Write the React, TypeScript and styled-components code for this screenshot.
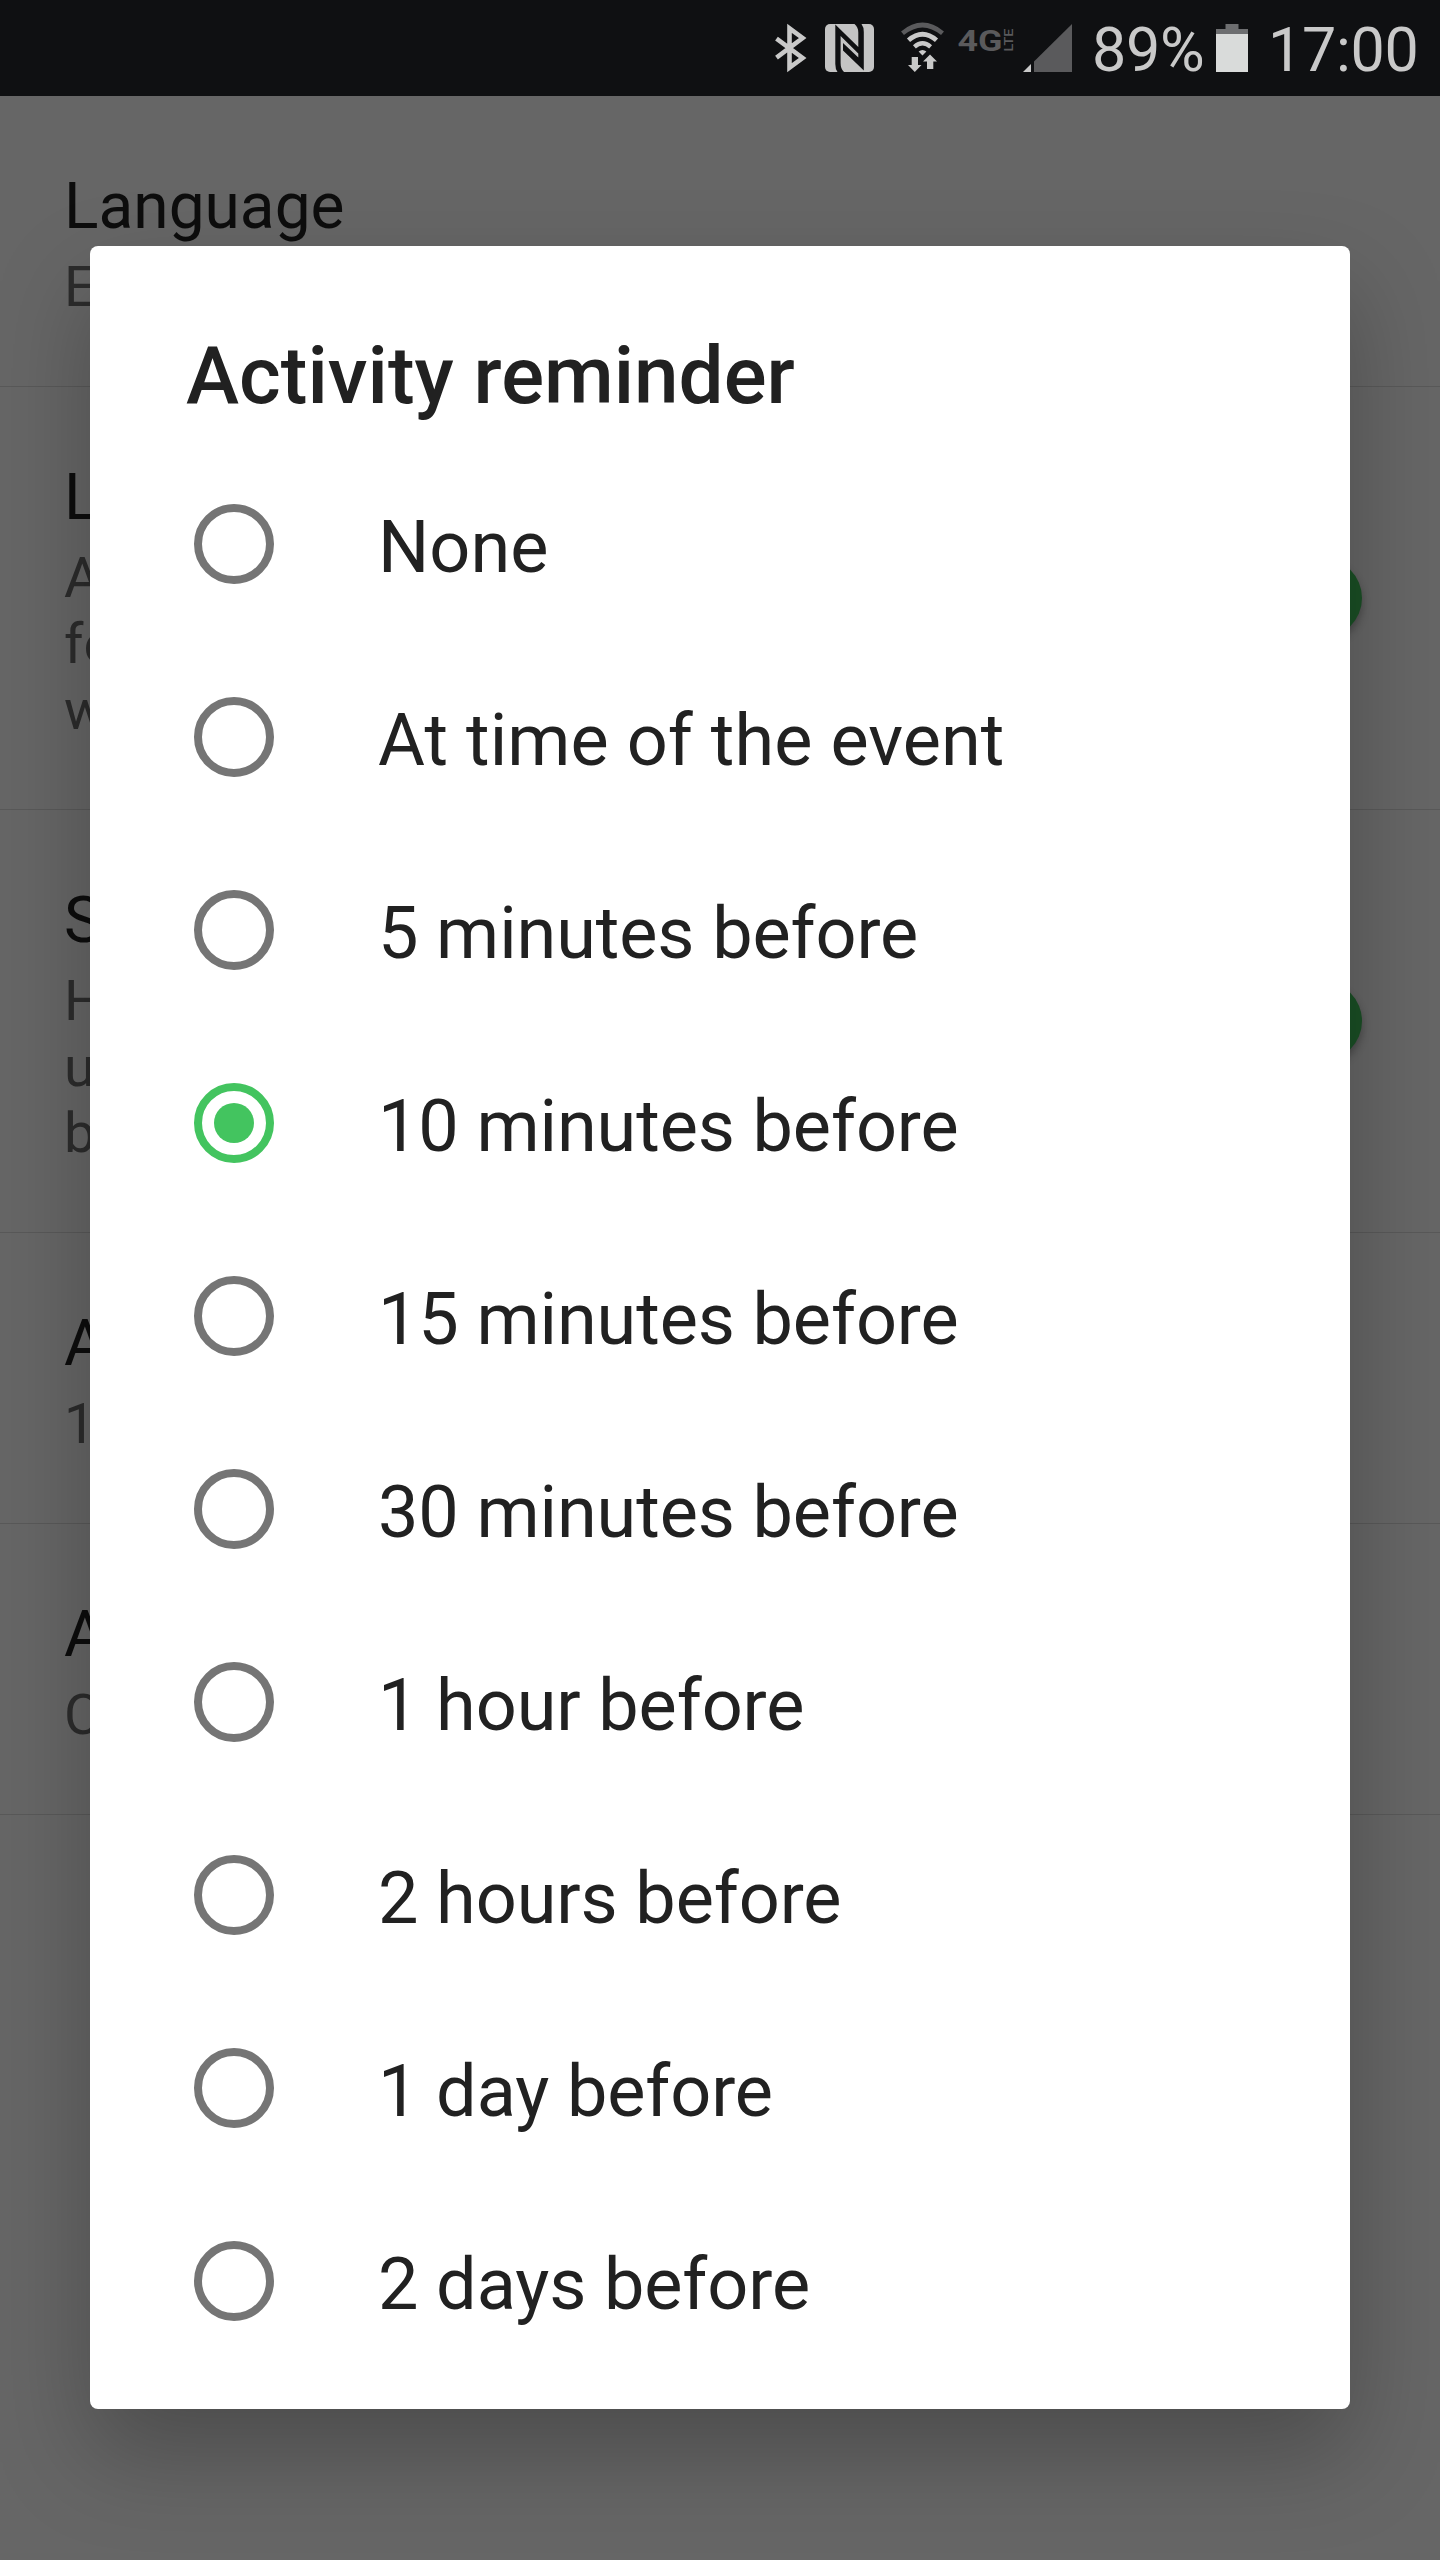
import React from "react";
import styled, { createGlobalStyle } from "styled-components";

const GlobalStyle = createGlobalStyle`
  *, *::before, *::after { box-sizing: border-box; }
  html, body { margin: 0; padding: 0; background: #666666; }
  body { font-family: Roboto, "Noto Sans", sans-serif; }
`;

const Screen = styled.div`
  position: relative;
  width: 1440px;
  height: 2560px;
  overflow: hidden;
  background: #666666;
`;

const StatusBar = styled.header`
  display: flex;
  align-items: flex-start;
  height: 96px;
  padding: 20px 0 0 771px;
  background: #0f1012;
  color: #c9c9c9;
`;

const StatusIcons = styled.svg`
  flex: none;
  display: block;
  width: 304px;
  height: 60px;
`;

const NetworkLabel = styled.text<{ $weight: number }>`
  font-family: Roboto, "Noto Sans", sans-serif;
  font-weight: ${(p) => p.$weight};
  fill: #5a5a5c;
`;

const StatusText = styled.span<{ $gap: number }>`
  flex: none;
  margin-left: ${(p) => p.$gap}px;
  font-size: 61px;
  line-height: 60px;
  letter-spacing: -0.3px;
  white-space: nowrap;
`;

const PercentText = styled(StatusText)`
  width: 112px;
`;

const BatteryIcon = styled.svg`
  flex: none;
  display: block;
  width: 32px;
  height: 48px;
  margin: 4px 0 0 12px;
`;

const Settings = styled.main`
  display: flex;
  flex-direction: column;
`;

const Setting = styled.section`
  display: flex;
  align-items: center;
  justify-content: space-between;
  padding: 73px 78px 66px 64px;
  border-bottom: 1px solid #595959;
`;

const SettingText = styled.div`
  display: flex;
  flex-direction: column;
  gap: 10px;
`;

const SettingTitle = styled.div`
  font-size: 64px;
  line-height: 75px;
  color: #0d0d0d;
`;

const SettingSummary = styled.div`
  display: flex;
  flex-direction: column;
  font-size: 56px;
  line-height: 66px;
  color: #2c2c2c;
`;

const SwitchThumb = styled.span`
  width: 80px;
  height: 80px;
  margin-bottom: 7px;
  border-radius: 50%;
  background: #1a4f25;
  box-shadow: 0 5px 8px rgba(0, 0, 0, 0.3);
`;

const Dialog = styled.div`
  position: absolute;
  left: 90px;
  top: 246px;
  width: 1260px;
  height: 2163px;
  display: flex;
  flex-direction: column;
  border-radius: 8px;
  background: #ffffff;
  color: #212121;
  box-shadow: 0 44px 96px rgba(0, 0, 0, 0.26);
`;

const DialogTitle = styled.h1`
  margin: 0;
  padding: 83px 96px 24px;
  font-size: 80px;
  font-weight: 500;
  line-height: 94px;
`;

const Options = styled.ul`
  margin: 0;
  padding: 0;
  list-style: none;
`;

const Option = styled.li`
  display: flex;
  align-items: center;
  height: 193px;
  padding-left: 104px;
`;

const Radio = styled.span<{ $on: boolean }>`
  flex: none;
  display: flex;
  align-items: center;
  justify-content: center;
  width: 80px;
  height: 80px;
  margin-top: 1px;
  border: 8px solid ${(p) => (p.$on ? "#43c45f" : "#757575")};
  border-radius: 50%;
`;

const RadioDot = styled.span`
  width: 40px;
  height: 40px;
  border-radius: 50%;
  background: #43c45f;
`;

const OptionLabel = styled.span<{ $tracking: number }>`
  margin-left: 104px;
  padding-top: 9px;
  font-size: 72px;
  line-height: 84px;
  letter-spacing: ${(p) => p.$tracking}px;
  white-space: nowrap;
`;

const settings = [
  { title: "Language", summary: ["E"], toggle: false },
  { title: "L", summary: ["A", "fo", "w"], toggle: true },
  { title: "S", summary: ["H", "u", "b"], toggle: true },
  { title: "A", summary: ["1"], toggle: false },
  { title: "A", summary: ["C"], toggle: false },
];

const options = [
  { label: "None", tracking: 0 },
  { label: "At time of the event", tracking: 0.08 },
  { label: "5 minutes before", tracking: -0.1 },
  { label: "10 minutes before", tracking: -0.1 },
  { label: "15 minutes before", tracking: -0.1 },
  { label: "30 minutes before", tracking: -0.1 },
  { label: "1 hour before", tracking: -0.1 },
  { label: "2 hours before", tracking: -0.1 },
  { label: "1 day before", tracking: -0.1 },
  { label: "2 days before", tracking: -0.1 },
];

const selected = "10 minutes before";

function Indicators() {
  return (
    <StatusIcons viewBox="771 20 304 60">
      {/* bluetooth */}
      <path
        d="M776.5 38.7 L802.6 58 L789.5 67.6 V28.4 L802.6 38 L776.5 57.6"
        fill="none"
        stroke="#c9c9c9"
        strokeWidth="4.6"
      />
      {/* nfc */}
      <rect x="825" y="24" width="49" height="48" rx="5" fill="#c4c4c4" />
      <path
        d="M835.3 24.6 L858.3 47 V32.5 Q858.3 27 854.5 24 H861.5 Q863.8 27 863.8 32 V70.6 L843 50.5 V43 L858.3 57.6 V53.5 L840.6 36 V63 Q840.6 69 844 72 H837.5 Q835.3 69 835.3 64 Z"
        fill="#0f1012"
      />
      {/* wi-fi with traffic arrows */}
      <g fill="none">
        <path d="M902.5 33.2 Q922.5 16.8 942.5 33.2" stroke="#5a5a5c" strokeWidth="4.6" />
        <path d="M908.5 40.3 Q922.5 28.2 936.5 40.3" stroke="#c9c9c9" strokeWidth="4.8" />
        <path d="M914.4 46.8 Q922.5 39.8 930.6 46.8" stroke="#c9c9c9" strokeWidth="4.4" />
      </g>
      <path d="M918.6 51.6 Q922.5 48.2 926.4 51.6 L922.5 55.6 Z" fill="#c9c9c9" />
      <path d="M911.7 57 H918 V65 H921.5 L914.8 72 L908 65 H911.7 Z" fill="#c9c9c9" />
      <path d="M927 69 V61.5 H923 L930 54.5 L937 61.5 H933.3 V69 Z" fill="#c9c9c9" />
      {/* network type */}
      <NetworkLabel
        $weight={700}
        x="957.5"
        y="50.5"
        fontSize="30"
        textLength="45"
        lengthAdjust="spacingAndGlyphs"
      >
        4G
      </NetworkLabel>
      <NetworkLabel
        $weight={500}
        transform="translate(1012.8 51.5) rotate(-90)"
        fontSize="13"
        textLength="23"
        lengthAdjust="spacingAndGlyphs"
      >
        LTE
      </NetworkLabel>
      {/* signal */}
      <path d="M1023 72 L1031 64 V72 Z" fill="#c9c9c9" />
      <path d="M1034 61.5 L1072 24 V72 H1034 Z" fill="#5a5a5c" />
    </StatusIcons>
  );
}

export default function App() {
  return (
    <Screen>
      <GlobalStyle />
      <StatusBar>
        <Indicators />
        <PercentText $gap={17}>89%</PercentText>
        <BatteryIcon viewBox="0 0 32 48" aria-hidden="true">
          <path d="M9.5 0 H22.5 V5 H32 V10 H0 V5 H9.5 Z" fill="#6d6e70" />
          <rect y="10" width="32" height="38" fill="#d9dbda" />
        </BatteryIcon>
        <StatusText $gap={20}>17:00</StatusText>
      </StatusBar>
      <Settings>
        {settings.map((s, i) => (
          <Setting key={i}>
            <SettingText>
              <SettingTitle>{s.title}</SettingTitle>
              <SettingSummary>
                {s.summary.map((line) => (
                  <span key={line}>{line}</span>
                ))}
              </SettingSummary>
            </SettingText>
            {s.toggle && <SwitchThumb />}
          </Setting>
        ))}
      </Settings>
      <Dialog role="dialog" aria-modal="true">
        <DialogTitle>Activity reminder</DialogTitle>
        <Options>
          {options.map(({ label, tracking }) => (
            <Option key={label}>
              <Radio $on={label === selected}>{label === selected && <RadioDot />}</Radio>
              <OptionLabel $tracking={tracking}>{label}</OptionLabel>
            </Option>
          ))}
        </Options>
      </Dialog>
    </Screen>
  );
}
